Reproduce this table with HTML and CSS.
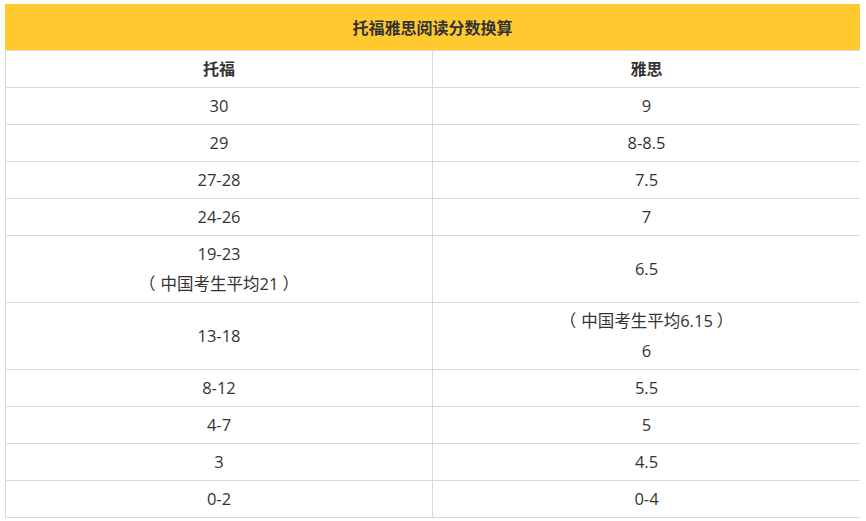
FILE: index.html
```html
<!DOCTYPE html>
<html lang="zh-CN">
<head>
<meta charset="utf-8">
<title>托福雅思阅读分数换算</title>
<link rel="stylesheet" href="styles.css">
</head>
<body>
<div class="table">
  <div class="title">托福雅思阅读分数换算</div>
  <div class="row head"><div class="cell">托福</div><div class="cell">雅思</div></div>
  <div class="row"><div class="cell">30</div><div class="cell">9</div></div>
  <div class="row"><div class="cell">29</div><div class="cell">8-8.5</div></div>
  <div class="row"><div class="cell">27-28</div><div class="cell">7.5</div></div>
  <div class="row"><div class="cell">24-26</div><div class="cell">7</div></div>
  <div class="row"><div class="cell"><span>19-23</span><span><span class="open">（</span>中国考生平均21<span class="close">）</span></span></div><div class="cell">6.5</div></div>
  <div class="row"><div class="cell">13-18</div><div class="cell"><span><span class="open">（</span>中国考生平均6.15<span class="close">）</span></span><span>6</span></div></div>
  <div class="row"><div class="cell">8-12</div><div class="cell">5.5</div></div>
  <div class="row"><div class="cell">4-7</div><div class="cell">5</div></div>
  <div class="row"><div class="cell">3</div><div class="cell">4.5</div></div>
  <div class="row"><div class="cell">0-2</div><div class="cell">0-4</div></div>
</div>
</body>
</html>
```
FILE: styles.css
```css
html, body {
  margin: 0;
  padding: 0;
  background: #ffffff;
}
body {
  padding: 4px 0 0 5px;
  font-family: "Open Sans", "Noto Sans CJK SC", sans-serif;
  font-size: 16.5px;
  color: #333333;
  text-spacing-trim: space-all;
}
.table {
  width: 855px;
}
.title {
  height: 46px;
  background: #ffca30;
  display: flex;
  align-items: center;
  justify-content: center;
  font-weight: bold;
  font-size: 16px;
  color: #333333;
  border-bottom: 1px solid #d9d9d9;
}
.row {
  display: grid;
  grid-template-columns: 426px 1fr;
  border-left: 1px solid #d9d9d9;
  border-bottom: 1px solid #d9d9d9;
}
.cell {
  padding: 3px 0;
  line-height: 30px;
  text-align: center;
  display: flex;
  flex-direction: column;
  justify-content: center;
}
.cell + .cell {
  border-left: 1px solid #d9d9d9;
}
.head .cell {
  font-weight: bold;
  font-size: 16px;
}
.open {
  margin-right: 5px;
}
.close {
  margin-left: 4px;
}
```
